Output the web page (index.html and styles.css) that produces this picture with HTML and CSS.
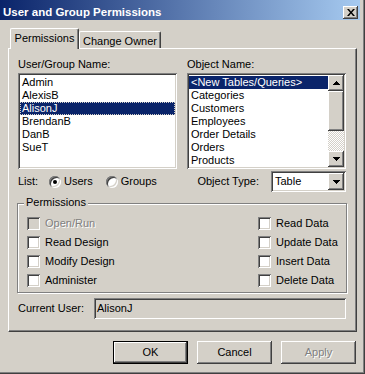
FILE: index.html
```html
<!DOCTYPE html>
<html lang="en">
<head>
<meta charset="UTF-8">
<meta name="viewport" content="width=device-width, initial-scale=1.0">
<title>User and Group Permissions</title>
<link rel="stylesheet" href="styles.css">
</head>
<body>

<div class="window">
  <div class="titlebar">
    <span class="caption">User and Group Permissions</span>
    <span class="close raised">
      <svg width="8" height="7" viewBox="0 0 8 7"><path d="M0 0h2l2 2.4L6 0h2L5 3.5 8 7H6L4 4.6 2 7H0l3-3.5z"/></svg>
    </span>
  </div>

  <div class="client">
    <div class="tabs">
      <div class="tab active">Permissions</div>
      <div class="tab">Change Owner</div>
    </div>

    <div class="page">
      <div class="columns">
        <div class="column">
          <div class="label">User/Group Name:</div>
          <div class="listbox sunken">
            <div class="items">
              <div class="item">Admin</div>
              <div class="item">AlexisB</div>
              <div class="item selected focus">AlisonJ</div>
              <div class="item">BrendanB</div>
              <div class="item">DanB</div>
              <div class="item">SueT</div>
            </div>
          </div>
          <div class="row">
            <span class="list-label">List:</span>
            <span class="radio checked"></span><span class="radio-text">Users</span>
            <span class="radio"></span><span class="radio-text">Groups</span>
          </div>
        </div>

        <div class="column">
          <div class="label">Object Name:</div>
          <div class="listbox sunken">
            <div class="items">
              <div class="item selected">&lt;New Tables/Queries&gt;</div>
              <div class="item">Categories</div>
              <div class="item">Customers</div>
              <div class="item">Employees</div>
              <div class="item">Order Details</div>
              <div class="item">Orders</div>
              <div class="item">Products</div>
            </div>
            <div class="scrollbar">
              <span class="arrow raised">
                <svg width="7" height="4" viewBox="0 0 7 4"><path d="M3 0h1v1h1v1h1v1h1v1H0V3h1V2h1V1h1z"/></svg>
              </span>
              <span class="thumb raised"></span>
              <span class="track"></span>
              <span class="arrow raised">
                <svg width="7" height="4" viewBox="0 0 7 4"><path d="M0 0h7v1H6v1H5v1H4v1H3V3H2V2H1V1H0z"/></svg>
              </span>
            </div>
          </div>
          <div class="row type-row">
            <span>Object Type:</span>
            <div class="combo sunken">
              <span class="combo-text">Table</span>
              <span class="arrow raised">
                <svg width="7" height="4" viewBox="0 0 7 4"><path d="M0 0h7v1H6v1H5v1H4v1H3V3H2V2H1V1H0z"/></svg>
              </span>
            </div>
          </div>
        </div>
      </div>

      <div class="group">
        <span class="legend">Permissions</span>
        <div class="checks">
          <div class="check disabled"><span class="box"></span>Open/Run</div>
          <div class="check"><span class="box"></span>Read Data</div>
          <div class="check"><span class="box"></span>Read Design</div>
          <div class="check"><span class="box"></span>Update Data</div>
          <div class="check"><span class="box"></span>Modify Design</div>
          <div class="check"><span class="box"></span>Insert Data</div>
          <div class="check"><span class="box"></span>Administer</div>
          <div class="check"><span class="box"></span>Delete Data</div>
        </div>
      </div>

      <div class="current">
        <span class="current-label">Current User:</span>
        <div class="textbox sunken">AlisonJ</div>
      </div>
    </div>

    <div class="buttons">
      <div class="button default">OK</div>
      <div class="button raised">Cancel</div>
      <div class="button raised disabled">Apply</div>
    </div>
  </div>
</div>

</body>
</html>
```

FILE: styles.css
```css
body {
  margin: 0;
  background: #d4d0c8;
  font-family: 'Liberation Sans', Arial, sans-serif;
  font-size: 11px;
  line-height: 13px;
  color: #000;
}
.window {
  width: 365px;
  height: 374px;
  box-sizing: border-box;
  padding-right: 5px;
  background: #d4d0c8;
  box-shadow: inset -1px -1px #404040, inset -2px -2px #808080;
  overflow: hidden;
}

/* 3d edges, windows classic */
.raised {
  background: #d4d0c8;
  box-shadow: inset -1px -1px #404040, inset 1px 1px #fff, inset -2px -2px #808080, inset 2px 2px #d4d0c8;
}
.sunken {
  box-sizing: border-box;
  padding: 2px;
  background: #fff;
  box-shadow: inset 1px 1px #808080, inset -1px -1px #fff, inset 2px 2px #404040, inset -2px -2px #d4d0c8;
}

.titlebar {
  height: 20px;
  box-sizing: border-box;
  padding: 4px 2px 0 3px;
  display: flex;
  align-items: center;
  justify-content: space-between;
  background: linear-gradient(to right, #0a246a, #a6caf0);
}
.caption {
  color: #fff;
  font-weight: bold;
  font-size: 11.5px;
}
.close {
  width: 15px;
  height: 13px;
  display: flex;
  align-items: center;
  justify-content: center;
}

.client {
  padding: 8px 3px 0 8px;
}
.tabs {
  display: flex;
  align-items: flex-start;
  height: 21px;
  margin: 0 0 -1px 2px;
}
.tab {
  position: relative;
  box-sizing: border-box;
  height: 17px;
  margin-top: 3px;
  padding-top: 3px;
  width: 82px;
  text-align: center;
  background: #d4d0c8;
  border-left: 1px solid #fff;
  border-top: 1px solid #fff;
  border-right: 1px solid #404040;
  border-radius: 2px 2px 0 0;
  box-shadow: inset -1px 0 #808080;
}
.tab.active {
  z-index: 1;
  width: 69px;
  height: 21px;
  margin-top: 0;
}

.page {
  border-left: 1px solid #fff;
  border-top: 1px solid #fff;
  border-right: 1px solid #404040;
  border-bottom: 1px solid #404040;
  box-shadow: inset -1px -1px #808080;
  padding: 9px 10px 12px 9px;
}
.columns {
  display: flex;
  gap: 10px;
}
.column {
  width: 159px;
}
.label {
  margin-bottom: 2px;
}
.listbox {
  height: 96px;
  display: flex;
}
.items {
  flex: 1;
  padding-top: 1px;
  overflow: hidden;
  white-space: nowrap;
}
.item {
  height: 13px;
  padding-left: 2px;
}
.item.selected {
  background: #0a246a;
  color: #fff;
}
.item.focus {
  outline: 1px dotted #d4d0c8;
  outline-offset: -1px;
}
.scrollbar {
  width: 16px;
  display: flex;
  flex-direction: column;
}
.arrow {
  width: 16px;
  height: 16px;
  flex: none;
  display: flex;
  align-items: center;
  justify-content: center;
}
.thumb {
  height: 40px;
}
.track {
  flex: 1;
  background: repeating-conic-gradient(#fff 0 25%, #d4d0c8 0 50%) 0 0 / 2px 2px;
}

.row {
  height: 21px;
  margin-top: 2px;
  display: flex;
  align-items: center;
}
.list-label {
  width: 31px;
}
.radio {
  position: relative;
  width: 12px;
  height: 12px;
  border-radius: 50%;
  background: #fff;
  box-shadow: inset 1px 1px #808080, inset -1px -1px #fff, inset 2px 2px #404040, inset -2px -2px #d4d0c8;
}
.radio.checked::after {
  content: '';
  position: absolute;
  left: 4px;
  top: 4px;
  width: 4px;
  height: 4px;
  border-radius: 50%;
  background: #000;
}
.radio-text {
  margin: 0 13px 0 3px;
}
.type-row {
  justify-content: flex-end;
  gap: 12px;
}
.combo {
  width: 75px;
  height: 21px;
  display: flex;
  align-items: stretch;
}
.combo-text {
  flex: 1;
  padding: 2px 0 0 2px;
}
.combo .arrow {
  height: 17px;
}

.group {
  margin: 11px -1px 0;
  padding: 0 0 2px 9px;
  border: 1px solid #808080;
  box-shadow: 1px 1px #fff, inset 1px 1px #fff;
}
.legend {
  display: block;
  width: fit-content;
  margin: -8px 0 0 -3px;
  padding: 0 2px;
  background: #d4d0c8;
}
.checks {
  padding-top: 5px;
  display: grid;
  grid-template-columns: 231px 1fr;
  grid-auto-rows: 19px;
}
.check {
  display: flex;
  align-items: center;
  gap: 5px;
}
.box {
  box-sizing: border-box;
  width: 13px;
  height: 13px;
  background: #fff;
  box-shadow: inset 1px 1px #808080, inset -1px -1px #fff, inset 2px 2px #404040, inset -2px -2px #d4d0c8;
}
.disabled {
  color: #808080;
  text-shadow: 1px 1px #fff;
}
.check.disabled .box {
  background: #d4d0c8;
}

.current {
  margin-top: 5px;
  display: flex;
  align-items: center;
}
.current-label {
  width: 76px;
}
.textbox {
  flex: 1;
  height: 21px;
  padding: 4px 3px 0;
  background: #d4d0c8;
}

.buttons {
  display: flex;
  justify-content: flex-end;
  gap: 9px;
  margin-top: 9px;
  padding-right: 1px;
}
.button {
  box-sizing: border-box;
  width: 75px;
  height: 23px;
  display: flex;
  align-items: center;
  justify-content: center;
}
.button.default {
  border: 1px solid #000;
  background: #d4d0c8;
  box-shadow: inset -1px -1px #404040, inset 1px 1px #fff, inset -2px -2px #808080;
}
```
